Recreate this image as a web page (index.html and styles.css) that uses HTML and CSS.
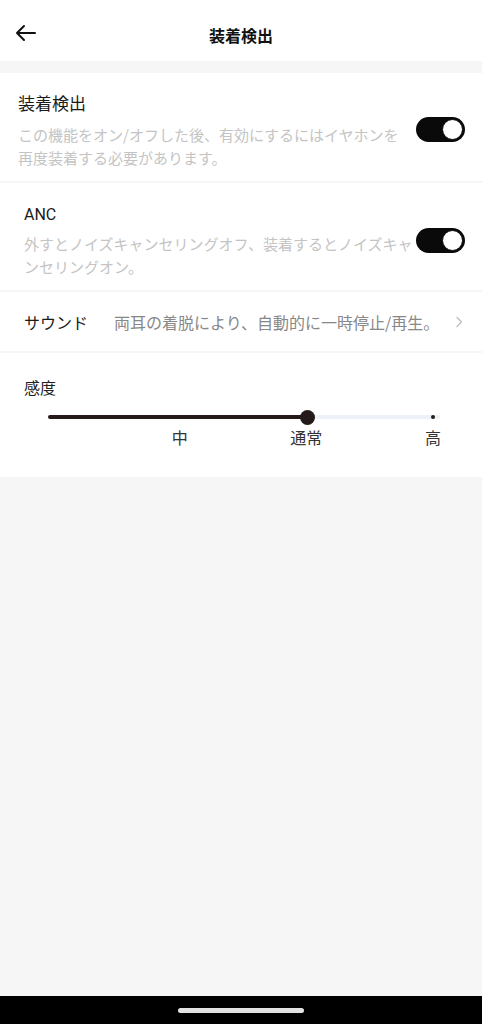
FILE: index.html
```html
<!DOCTYPE html>
<html lang="ja">

<head>
    <meta charset="UTF-8">
    <meta name="viewport" content="width=device-width, initial-scale=1.0">
    <title>装着検出</title>
    <link rel="stylesheet" href="styles.css">
</head>

<body>
    <div class="page">
        <!-- ヘッダー -->
        <header class="header">
            <button class="back-btn" aria-label="戻る">
                <svg width="22" height="18" viewBox="0 0 22 18" fill="none" stroke="#111" stroke-width="2"
                    stroke-linecap="round" stroke-linejoin="round">
                    <path d="M20 9H2M9 2L2 9l7 7" />
                </svg>
            </button>
            <h1 class="header-title">装着検出</h1>
        </header>

        <main class="content">
            <section class="card">
                <div class="row row-toggle row-first">
                    <div class="row-text">
                        <div class="row-title">装着検出</div>
                        <div class="row-desc">この機能をオン/オフした後、有効にするにはイヤホンを再度装着する必要があります。</div>
                    </div>
                    <span class="switch on"><span class="knob"></span></span>
                </div>

                <div class="row row-toggle row-anc">
                    <div class="row-text">
                        <div class="row-title latin">ANC</div>
                        <div class="row-desc">外すとノイズキャンセリングオフ、装着するとノイズキャンセリングオン。</div>
                    </div>
                    <span class="switch on"><span class="knob"></span></span>
                </div>

                <div class="row row-link">
                    <span class="link-label">サウンド</span>
                    <span class="link-value">両耳の着脱により、自動的に一時停止/再生。</span>
                    <svg class="chevron" width="8" height="12" viewBox="0 0 8 12" fill="none" stroke="#bdbdbd"
                        stroke-width="1.3" stroke-linecap="round" stroke-linejoin="round">
                        <path d="M2 1.5L6.5 6 2 10.5" />
                    </svg>
                </div>

                <div class="row row-slider">
                    <div class="slider-title">感度</div>
                    <div class="slider">
                        <div class="track">
                            <div class="track-fill" style="width: 259px"></div>
                            <span class="end-dot"></span>
                        </div>
                        <span class="thumb" style="left: 252px"></span>
                    </div>
                    <div class="slider-labels">
                        <span></span>
                        <span>中</span>
                        <span>通常</span>
                        <span>高</span>
                    </div>
                </div>
            </section>
        </main>

        <!-- ナビゲーションバー -->
        <div class="nav-bar"><span class="nav-pill"></span></div>
    </div>
</body>

</html>
```

FILE: styles.css
```css
* {
    box-sizing: border-box;
}

body {
    margin: 0;
    font-family: Roboto, "Noto Sans CJK JP", sans-serif;
    background-color: #f6f6f6;
    color: #222;
}

.page {
    height: 100vh;
    display: flex;
    flex-direction: column;
}

.header {
    height: 61px;
    background-color: #fff;
    display: flex;
    align-items: center;
    justify-content: center;
    position: relative;
    margin-bottom: 12px;
}

.back-btn {
    position: absolute;
    left: 15px;
    top: 24px;
    padding: 0;
    border: none;
    background: none;
    display: flex;
}

.header-title {
    margin: 0;
    margin-top: 9px;
    font-family: "Noto Sans CJK JP", sans-serif;
    font-size: 16px;
    font-weight: 700;
    color: #111;
}

.content {
    flex: 1;
}

.card {
    background-color: #fff;
}

.row {
    display: flex;
    align-items: center;
    border-bottom: 2px solid #f6f6f6;
}

.row-toggle {
    padding-right: 17px;
}

.row-text {
    flex: 1;
    min-width: 0;
}

.row-first {
    padding-top: 17px;
    padding-bottom: 12px;
    padding-left: 18px;
}

.row-first .row-text {
    margin-right: 10px;
}

.row-anc {
    padding-top: 20px;
    padding-bottom: 12px;
    padding-left: 24px;
}

.row-title {
    font-family: "Noto Sans CJK JP", sans-serif;
    font-size: 17px;
    line-height: 26px;
    color: #1a1a1a;
}

.row-title.latin {
    font-family: Roboto, sans-serif;
    font-size: 16px;
    line-height: 24px;
}

.row-desc {
    margin-top: 7px;
    font-family: "Noto Sans CJK JP", sans-serif;
    font-size: 15px;
    line-height: 23px;
    color: #c4c4c4;
}

.row-anc .row-desc {
    margin-top: 5px;
}

.switch {
    flex: none;
    width: 49px;
    height: 25px;
    border-radius: 13px;
    background-color: #0a0a0a;
    display: flex;
    align-items: center;
    justify-content: flex-end;
    padding-right: 2px;
}

.knob {
    width: 21px;
    height: 21px;
    border-radius: 50%;
    background-color: #fff;
    border: 1.5px solid #0a0a0a;
}

.row-link {
    height: 61px;
    padding-left: 24px;
    padding-right: 19px;
    font-family: "Noto Sans CJK JP", sans-serif;
    font-size: 16px;
}

.link-label {
    color: #1a1a1a;
    margin-right: 26px;
}

.link-value {
    flex: 1;
    color: #888;
    white-space: nowrap;
}

.row-slider {
    display: block;
    border-bottom: none;
    padding: 22px 0 29px 24px;
    font-family: "Noto Sans CJK JP", sans-serif;
}

.slider-title {
    font-size: 16px;
    line-height: 24px;
    color: #222;
}

.slider {
    margin: 11px 0 0 24px;
    width: 392px;
    height: 14px;
    position: relative;
    display: flex;
    align-items: center;
}

.track {
    width: 100%;
    height: 4px;
    border-radius: 2px;
    background-color: #edf2f8;
    position: relative;
    display: flex;
    align-items: center;
}

.track-fill {
    height: 4px;
    border-radius: 2px;
    background-color: #231a19;
}

.end-dot {
    position: absolute;
    left: 383px;
    width: 4px;
    height: 4px;
    border-radius: 50%;
    background-color: #231a19;
}

.thumb {
    position: absolute;
    top: 0;
    width: 15px;
    height: 15px;
    border-radius: 50%;
    background-color: #231a19;
}

.slider-labels {
    margin: 2px 0 0 9px;
    width: 420px;
    display: flex;
    justify-content: space-between;
    font-size: 16px;
    line-height: 22px;
    color: #333;
}

.slider-labels span {
    width: 40px;
    text-align: center;
}

.nav-bar {
    height: 28px;
    background-color: #000;
    display: flex;
    justify-content: center;
    padding-top: 12px;
}

.nav-pill {
    width: 126px;
    height: 5px;
    border-radius: 3px;
    background-color: #e2e2e2;
}
```
